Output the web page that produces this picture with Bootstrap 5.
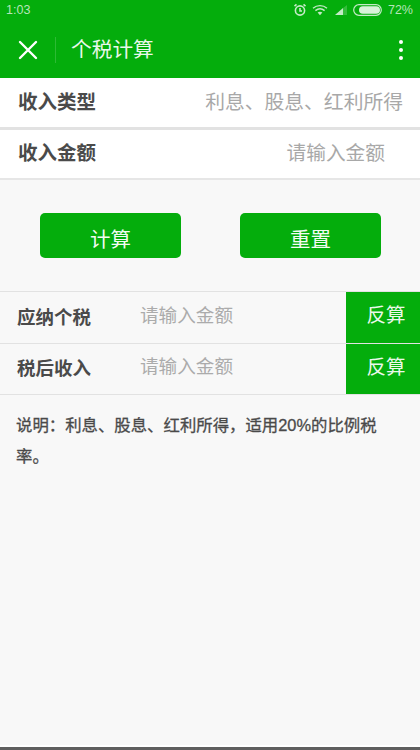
<!DOCTYPE html>
<html lang="zh">
<head>
<meta charset="utf-8">
<title>个税计算</title>
<link href="https://cdn.jsdelivr.net/npm/bootstrap@5.3.0/dist/css/bootstrap.min.css" rel="stylesheet">
<style>
html,body{height:100%;margin:0}
body{background:#f8f8f8;font-family:"Liberation Sans","Noto Sans CJK SC",sans-serif;overflow:hidden}
.shell{height:750px;width:420px}
.head-wrap{background:#04ad0c;height:78px;color:#fff}
.status-line{height:20px;padding:0 7px 0 6px;font-size:12.5px;color:#b5e5b8}
.status-icons{gap:5.5px}
.status-line svg{display:block}
.app-line{height:58px;padding:2px 17px 0 18px}
.close-ico{width:20px;height:20px}
.split{width:1px;height:26px;background:#2dba34;margin:0 15px 0 17px}
.app-title{font-size:20.7px;color:#e9f8ea}
.more-dots{width:5px;gap:4px}
.more-dots i{display:block;width:4px;height:4px;border-radius:50%;background:#fff}
.info-line{background:#fff;font-size:19.5px;font-weight:700;color:#4a4a4a;padding:0 18px}
.info-a{border-bottom:3px solid #e2e2e2;height:52px}
.info-b{height:50px;border-bottom:2px solid #e6e6e6}
.hint{font-weight:400;color:#a8a8a8}
.hint-a{margin-right:-1px;font-size:19.8px}
.hint-b{margin-right:17px;font-size:19.7px}
.act-row{padding:33px 39px 33px 40px}
.act-btn{width:141px;height:45px;background:#04ad0c;color:#f2fbf2;border:0;border-radius:5px;font-size:20.5px;padding:10px 0 0;line-height:1}
.act-btn:hover,.act-btn:active{background:#04ad0c!important;color:#fff!important}
.calc-row{height:51.5px;border-top:1.5px solid #e2e2e2;font-size:18.5px}
.calc-end{border-bottom:1.5px solid #e2e2e2;height:52.5px}
.calc-name{width:140px;padding-left:17px;font-weight:700;color:#4a4a4a;padding-top:1px}
.calc-hint{font-size:18.6px;color:#ababab;margin-top:-3px}
.calc-btn{width:74px;height:100%;background:#04ad0c;color:#eaf8ea;border:0;border-radius:0;font-size:19.5px;padding:0 0 3px 6px;line-height:1}
.calc-btn:hover,.calc-btn:active{background:#04ad0c!important;color:#fff!important}
.note{padding:15px 30px 0 16px;font-size:16.4px;line-height:31px;color:#4a4a4a;font-weight:400;-webkit-text-stroke:.3px #4a4a4a}
.foot-line{height:3px;background:#5f5f5f}
.foot-light{height:2px;background:#fff}
</style>
</head>
<body>
<div class="shell d-flex flex-column">
  <header class="head-wrap">
    <div class="status-line d-flex align-items-center justify-content-between">
      <span>1:03</span>
      <span class="status-icons d-flex align-items-center">
        <svg width="14" height="14" viewBox="0 0 14 14" fill="none" stroke="#c4eac6" stroke-width="1.6"><circle cx="7" cy="7.5" r="4.6"/><path d="M7 5v3h2M1.5 3.2 3.5 1.4M12.5 3.2 10.5 1.4"/></svg>
        <svg width="16" height="12" viewBox="0 0 16 12" fill="none" stroke="#c4eac6" stroke-width="1.4"><path d="M1 4.2C5 .8 11 .8 15 4.2M3.4 6.6c2.7-2.2 6.5-2.2 9.2 0"/><path d="M5.6 8.6c1.4-1 3.4-1 4.8 0L8 11.2z" fill="#c4eac6" stroke="none"/></svg>
        <svg width="14" height="10" viewBox="0 0 14 10"><path d="M1 10 9 3v7z" fill="#c4eac6"/><path d="M9 3l4-3v10H9z" fill="#c4eac6" opacity=".25"/></svg>
        <svg width="29" height="12" viewBox="0 0 29 12"><rect x=".7" y=".7" width="27.6" height="10.6" rx="5.3" fill="none" stroke="#c4eac6" stroke-width="1.2"/><rect x="6" y="2.2" width="21" height="7.6" rx="3.8" fill="#d8f2d9"/></svg>
        <span>72%</span>
      </span>
    </div>
    <div class="app-line d-flex align-items-center">
      <svg class="close-ico" viewBox="0 0 20 20" fill="none" stroke="#fff" stroke-width="2.4" stroke-linecap="round"><path d="M2 2 18 18M18 2 2 18"/></svg>
      <span class="split"></span>
      <span class="app-title flex-grow-1">个税计算</span>
      <span class="more-dots d-flex flex-column align-items-center"><i></i><i></i><i></i></span>
    </div>
  </header>
  <div class="info-line info-a d-flex align-items-center justify-content-between">
    <span>收入类型</span><span class="hint hint-a">利息、股息、红利所得</span>
  </div>
  <div class="info-line info-b d-flex align-items-center justify-content-between">
    <span>收入金额</span><span class="hint hint-b">请输入金额</span>
  </div>
  <div class="act-row d-flex justify-content-between">
    <button type="button" class="btn act-btn">计算</button>
    <button type="button" class="btn act-btn">重置</button>
  </div>
  <div class="calc-row d-flex align-items-center">
    <span class="calc-name">应纳个税</span>
    <span class="calc-hint flex-grow-1">请输入金额</span>
    <button type="button" class="btn calc-btn">反算</button>
  </div>
  <div class="calc-row calc-end d-flex align-items-center">
    <span class="calc-name">税后收入</span>
    <span class="calc-hint flex-grow-1">请输入金额</span>
    <button type="button" class="btn calc-btn">反算</button>
  </div>
  <p class="note mb-0 flex-grow-1">说明：利息、股息、红利所得，适用20%的比例税率。</p>
  <div class="foot-light"></div>
  <div class="foot-line"></div>
</div>
<script src="https://cdn.jsdelivr.net/npm/bootstrap@5.3.0/dist/js/bootstrap.bundle.min.js"></script>
</body>
</html>
